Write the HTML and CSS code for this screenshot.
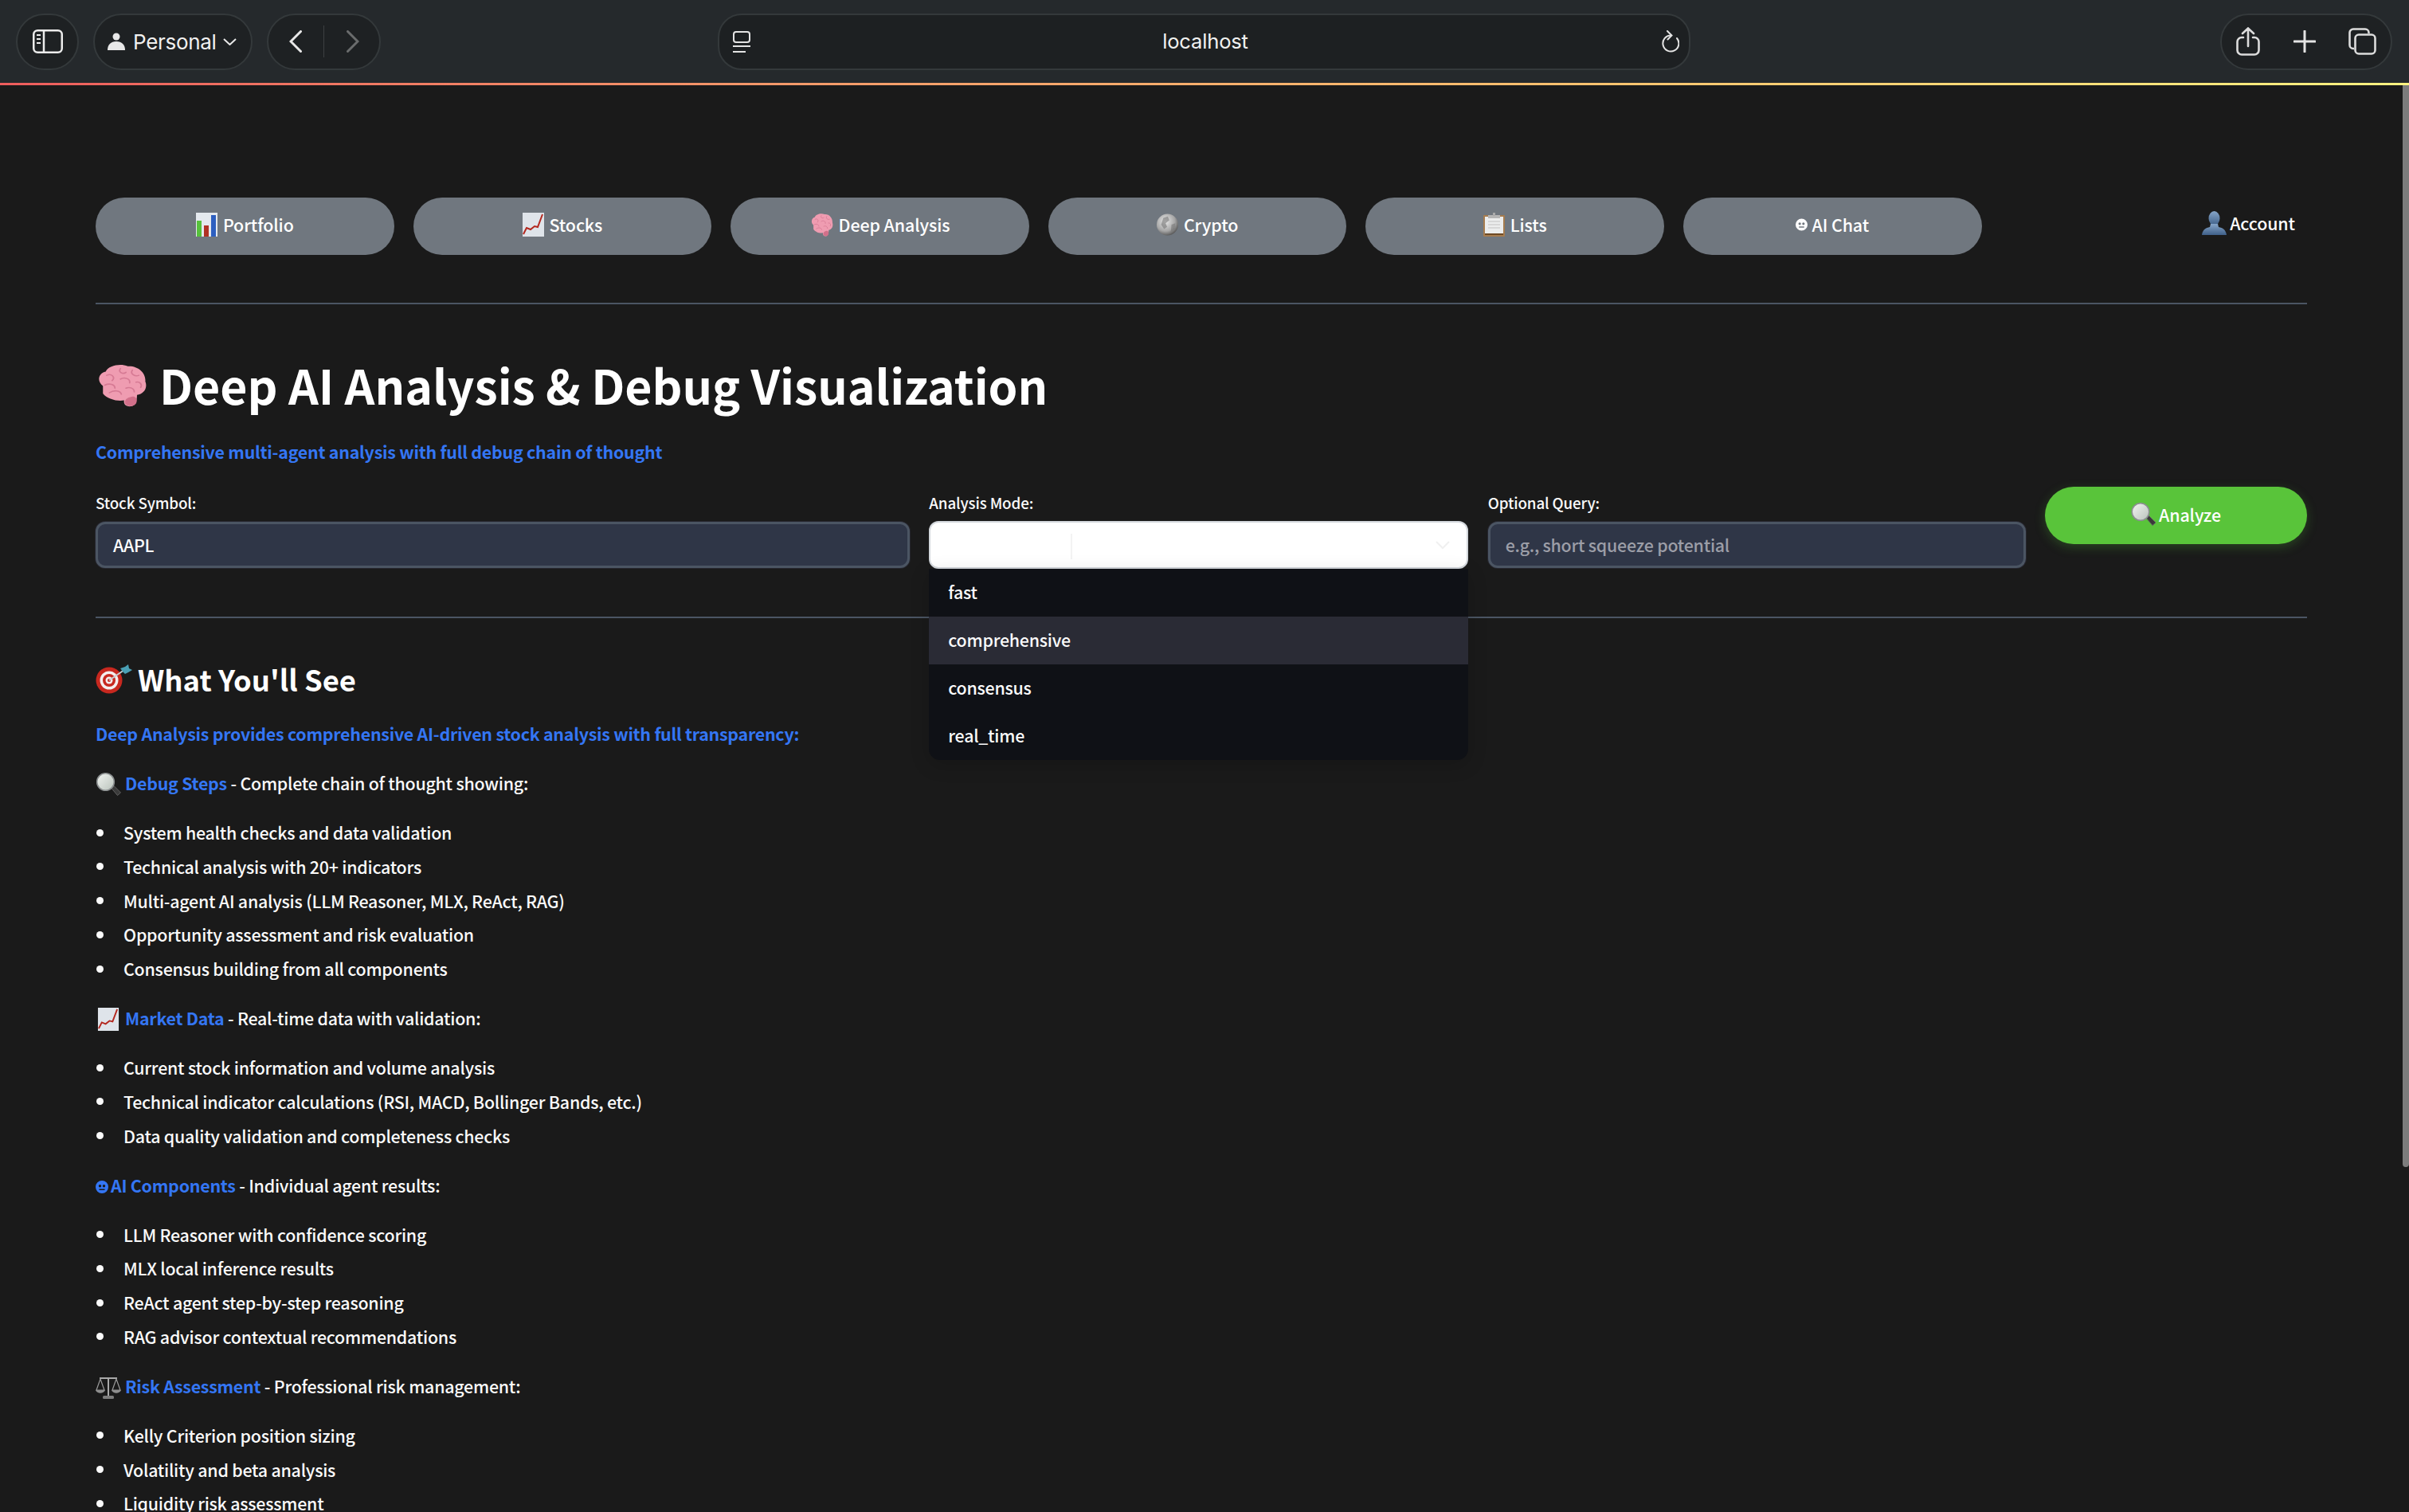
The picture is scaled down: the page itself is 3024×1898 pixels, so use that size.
FILE: index.html
```html
<!DOCTYPE html>
<html lang="en">
<head>
<meta charset="utf-8">
<title>Deep AI Analysis</title>
<link rel="stylesheet" href="styles.css">
</head>
<body>
<svg class="defs" width="0" height="0" aria-hidden="true">
  <defs>
    <linearGradient id="glass" x1="0" y1="0" x2="1" y2="1"><stop offset="0" stop-color="#f2f5f2"/><stop offset="1" stop-color="#b9c2bb"/></linearGradient>
    <radialGradient id="globe" cx="0.4" cy="0.35" r="0.75"><stop offset="0" stop-color="#e8e8e8"/><stop offset="0.6" stop-color="#a5a5a5"/><stop offset="1" stop-color="#3f3f3f"/></radialGradient>
    <linearGradient id="bustg" x1="0" y1="0" x2="0" y2="1"><stop offset="0" stop-color="#86a5c8"/><stop offset="1" stop-color="#3f6089"/></linearGradient>
    <symbol id="i-bars" viewBox="0 0 27 30">
      <rect width="27" height="30" fill="#e4e9ee"/><rect x="1" y="10" width="6" height="20" fill="#57c23c"/><rect x="10" y="16" width="6" height="14" fill="#b03225"/><rect x="19" y="3" width="6" height="27" fill="#2d5fc0"/>
    </symbol>
    <symbol id="i-chart" viewBox="0 0 27 30">
      <rect width="27" height="30" fill="#dfe4ea"/><path d="M1 27 L5 19 L10 21 L15 17 L19 18 L25 2" fill="none" stroke="#b4281f" stroke-width="2"/>
    </symbol>
    <symbol id="i-brain" viewBox="0 0 58 58" preserveAspectRatio="none">
      <path d="M8 30C1 24 3 13 11 11C14 3 27 0 35 4C46 3 55 13 54 24C57 33 52 41 45 42C45 48 44 55 39 57C33 58 30 54 31 49C24 51 12 47 8 40Z" fill="#ef9cb1"/>
      <path d="M40 44C44 44 46 48 44 53C42 58 34 58 32 53C31 48 35 45 40 44Z" fill="#d2708a"/>
      <path d="M12 16C17 13 22 18 18 23M27 7C24 12 30 15 33 12M40 9C37 14 43 18 47 16M10 29C15 26 21 28 21 33M27 21C31 18 38 20 37 26M44 25C48 24 51 28 49 32M15 39C20 35 27 36 28 41M33 33C37 31 42 33 42 38" fill="none" stroke="#d67a94" stroke-width="1.600" stroke-linecap="round"/>
    </symbol>
    <symbol id="i-globe" viewBox="0 0 29 30">
      <circle cx="14.500" cy="15" r="14.500" fill="url(#globe)"/>
      <path d="M9 6L15 4L17 9L12 13L14 18L10 21L6 15ZM20 15L25 13L24 21L19 25Z" fill="#777" opacity="0.6"/>
    </symbol>
    <symbol id="i-clip" viewBox="0 0 27 30">
      <rect y="3" width="27" height="27" rx="1" fill="#a67c4f"/><rect x="2" y="5" width="23" height="21" fill="#eceded"/><rect x="2" y="26" width="23" height="2" fill="#6e4a24"/><rect x="6" y="3" width="15" height="4" fill="#b5b5b5"/><rect x="12" y="0" width="3" height="4" fill="#aaa"/>
      <path d="M6 11H21M6 15H21M6 19H21" stroke="#cfcfcf" stroke-width="1.500"/>
    </symbol>
    <symbol id="i-bust" viewBox="0 0 31 30">
      <ellipse cx="15.500" cy="9" rx="7" ry="9" fill="url(#bustg)"/><path d="M11 16H20L21 20C26 21 30 23 31 30H0C1 23 5 21 10 20Z" fill="url(#bustg)"/>
    </symbol>
    <symbol id="i-lens" viewBox="0 0 31 29">
      <path d="M19 19L27 28.500L31 25L22 16Z" fill="#3a3a3a" stroke="#606060" stroke-width="1"/>
      <circle cx="12" cy="11.500" r="10.800" fill="url(#glass)" stroke="#8b8f90" stroke-width="1.600"/>
    </symbol>
    <symbol id="i-dart" viewBox="0 0 46 37">
      <circle cx="17" cy="20" r="16.500" fill="#c8281f"/><circle cx="17" cy="20" r="11.500" fill="#f4eeee"/><circle cx="17" cy="20" r="8" fill="#c8281f"/><circle cx="17" cy="20" r="4.500" fill="#f4eeee"/><circle cx="17" cy="20" r="2" fill="#c8281f"/>
      <path d="M17 20L36 7" stroke="#c9cdd0" stroke-width="2"/><path d="M31 5L37 3L41 0L42 5L46 7L41 10L37 12L34 9Z" fill="#4aa0b5"/>
    </symbol>
    <symbol id="i-scales" viewBox="0 0 32 29">
      <path d="M16 2V25M5 3H27M10 27H22" stroke="#a9a9a9" stroke-width="2" fill="none"/>
      <path d="M6 4L1 18H11ZM26 4L21 18H31Z" fill="none" stroke="#9a9a9a" stroke-width="1.200"/>
      <path d="M0 18C2 23 10 23 12 18ZM20 18C22 23 30 23 32 18Z" fill="#8e8e8e"/><rect x="9" y="25" width="14" height="4" rx="1.500" fill="#7c7c7c"/>
    </symbol>
    <symbol id="i-bot" viewBox="0 0 16 16">
      <path fill-rule="evenodd" d="M8 0a8 8 0 1 1 0 16A8 8 0 0 1 8 0ZM5.500 5a1.700 1.700 0 1 0 0 3.400 1.700 1.700 0 0 0 0-3.400ZM10.500 5a1.700 1.700 0 1 0 0 3.400 1.700 1.700 0 0 0 0-3.400ZM4.500 10.500V12H11.500V10.500Z" fill="currentColor"/>
    </symbol>
  </defs>
</svg>

<header class="toolbar">
  <div class="pill pill-side">
    <svg class="tb" width="38" height="30" viewBox="0 0 38 30"><rect x="1.250" y="1.250" width="35.500" height="27.500" rx="5" fill="none" stroke="#ececec" stroke-width="2.500"/><path d="M14 1V29" stroke="#ececec" stroke-width="2.500"/><path d="M5 7H10M5 12H10M5 17H10" stroke="#ececec" stroke-width="2"/></svg>
  </div>
  <div class="pill pill-profile">
    <svg width="22" height="22" viewBox="0 0 22 22"><circle cx="11" cy="5" r="4.500" fill="#e8e8e8"/><path d="M0 22C0 15 4 11 11 11S22 15 22 22Z" fill="#e8e8e8"/></svg>
    <span class="profile-name">Personal</span>
    <svg width="17" height="9" viewBox="0 0 17 9"><path d="M1 1L8.500 8L16 1" fill="none" stroke="#e8e8e8" stroke-width="2"/></svg>
  </div>
  <div class="pill pill-nav">
    <svg width="16" height="28" viewBox="0 0 16 28"><path d="M14.500 1.500L2 14L14.500 26.500" fill="none" stroke="#e8e8e8" stroke-width="3" stroke-linecap="round"/></svg>
    <span class="pill-divider"></span>
    <svg width="16" height="28" viewBox="0 0 16 28"><path d="M1.500 1.500L14 14L1.500 26.500" fill="none" stroke="#6a6c6d" stroke-width="3" stroke-linecap="round"/></svg>
  </div>
  <div class="address">
    <svg width="22" height="27" viewBox="0 0 22 27"><rect x="1" y="1" width="20" height="13" rx="3" fill="none" stroke="#e4e4e4" stroke-width="2"/><path d="M0 19H22M0 26H16" stroke="#e4e4e4" stroke-width="2"/></svg>
    <span class="address-text">localhost</span>
    <svg width="24" height="28" viewBox="0 0 24 28"><path d="M13.500 6.500A10 10 0 1 0 21 10" fill="none" stroke="#e4e4e4" stroke-width="2" stroke-linecap="round"/><path d="M9 1L14.500 6.500L9.500 11.500" fill="none" stroke="#e4e4e4" stroke-width="2" stroke-linecap="round"/></svg>
  </div>
  <div class="pill pill-actions">
    <svg width="30" height="36" viewBox="0 0 30 36"><path d="M9 13H7a5.500 5.500 0 0 0-5.500 5.500V29A5.500 5.500 0 0 0 7 34.500H23A5.500 5.500 0 0 0 28.500 29V18.500A5.500 5.500 0 0 0 23 13H21M15 24V2M8 8L15 1.500L22 8" fill="none" stroke="#dcdcdc" stroke-width="2.600" stroke-linecap="round"/></svg>
    <svg width="28" height="28" viewBox="0 0 28 28"><path d="M14 1V27M1 14H27" stroke="#e4e4e4" stroke-width="3" stroke-linecap="round"/></svg>
    <svg width="35" height="34" viewBox="0 0 35 34"><path d="M7 26H6A4.500 4.500 0 0 1 1.500 21.500V6A4.500 4.500 0 0 1 6 1.500H21A4.500 4.500 0 0 1 25.500 6V7" fill="none" stroke="#dcdcdc" stroke-width="2.600"/><rect x="8.500" y="8.500" width="25" height="24" rx="4.500" fill="none" stroke="#dcdcdc" stroke-width="2.600"/></svg>
  </div>
</header>
<div class="rainbow"></div>
<div class="scrollbar"></div>

<main class="page">
  <nav class="nav">
    <a class="nav-btn"><svg class="em-30"><use href="#i-bars"/></svg>Portfolio</a>
    <a class="nav-btn"><svg class="em-30"><use href="#i-chart"/></svg>Stocks</a>
    <a class="nav-btn"><svg class="em-30 em-brain"><use href="#i-brain"/></svg>Deep Analysis</a>
    <a class="nav-btn"><svg class="em-30"><use href="#i-globe"/></svg>Crypto</a>
    <a class="nav-btn"><svg class="em-30"><use href="#i-clip"/></svg>Lists</a>
    <a class="nav-btn"><svg class="em-bot"><use href="#i-bot"/></svg>AI Chat</a>
    <a class="account"><svg class="em-bust"><use href="#i-bust"/></svg>Account</a>
  </nav>
  <hr class="rule rule-top">

  <h1 class="title"><svg class="em-h1"><use href="#i-brain"/></svg>Deep AI Analysis &amp; Debug Visualization</h1>
  <p class="lead">Comprehensive multi-agent analysis with full debug chain of thought</p>

  <form class="controls">
    <div class="field">
      <label class="label">Stock Symbol:</label>
      <div class="input">AAPL</div>
    </div>
    <div class="field">
      <label class="label">Analysis Mode:</label>
      <div class="select">
        <span class="select-sep"></span>
        <svg class="select-chev" width="20" height="12" viewBox="0 0 20 12"><path d="M2 2L10 10L18 2" fill="none" stroke="#f0f0f0" stroke-width="2"/></svg>
        <ul class="menu">
          <li class="menu-item">fast</li>
          <li class="menu-item is-active">comprehensive</li>
          <li class="menu-item">consensus</li>
          <li class="menu-item">real_time</li>
        </ul>
      </div>
    </div>
    <div class="field">
      <label class="label">Optional Query:</label>
      <div class="input is-placeholder">e.g., short squeeze potential</div>
    </div>
    <button class="analyze" type="button"><svg class="em-lens"><use href="#i-lens"/></svg>Analyze</button>
  </form>
  <hr class="rule rule-mid">

  <h2 class="section"><svg class="em-dart"><use href="#i-dart"/></svg>What You'll See</h2>
  <p class="para"><strong class="hl">Deep Analysis provides comprehensive AI-driven stock analysis with full transparency:</strong></p>

  <p class="para"><svg class="em-inline"><use href="#i-lens"/></svg><strong class="hl">Debug Steps</strong> - Complete chain of thought showing:</p>
  <ul class="list">
    <li>System health checks and data validation</li>
    <li>Technical analysis with 20+ indicators</li>
    <li>Multi-agent AI analysis (LLM Reasoner, MLX, ReAct, RAG)</li>
    <li>Opportunity assessment and risk evaluation</li>
    <li>Consensus building from all components</li>
  </ul>

  <p class="para"><svg class="em-inline"><use href="#i-chart"/></svg><strong class="hl">Market Data</strong> - Real-time data with validation:</p>
  <ul class="list">
    <li>Current stock information and volume analysis</li>
    <li>Technical indicator calculations (RSI, MACD, Bollinger Bands, etc.)</li>
    <li>Data quality validation and completeness checks</li>
  </ul>

  <p class="para"><strong class="hl"><svg class="em-bot-inline"><use href="#i-bot"/></svg>AI Components</strong> - Individual agent results:</p>
  <ul class="list">
    <li>LLM Reasoner with confidence scoring</li>
    <li>MLX local inference results</li>
    <li>ReAct agent step-by-step reasoning</li>
    <li>RAG advisor contextual recommendations</li>
  </ul>

  <p class="para"><svg class="em-inline"><use href="#i-scales"/></svg><strong class="hl">Risk Assessment</strong> - Professional risk management:</p>
  <ul class="list">
    <li>Kelly Criterion position sizing</li>
    <li>Volatility and beta analysis</li>
    <li>Liquidity risk assessment</li>
  </ul>
</main>
</body>
</html>
```

FILE: styles.css
```css
* { box-sizing: border-box; }
html, body { margin: 0; height: 100%; overflow: hidden; background: #1a1a1a; }
body { font-family: "Noto Sans CJK SC", "Noto Sans", sans-serif; font-weight: 500; color: #fafafa; position: relative; }
.defs { position: absolute; }

.toolbar { height: 104px; background: #25292c; display: flex; align-items: center; padding: 0 21px 0 20px; font-family: Inter, "Liberation Sans", sans-serif; font-weight: 400; color: #f0f0f0; }
.pill { height: 71px; border-radius: 36px; background: #1e2123; border: 2px solid #34393b; display: flex; align-items: center; }
.pill-side { width: 79px; justify-content: center; }
.pill-profile { width: 200px; margin-left: 18px; padding-left: 16px; }
.profile-name { font-size: 26px; margin: 0 8px 0 10px; letter-spacing: -0.3px; }
.pill-nav { width: 143px; margin-left: 18px; padding-left: 26px; }
.pill-divider { width: 1px; height: 40px; background: #3d4042; margin: 0 28px 0 27px; }
.address { width: 1221px; height: 71px; margin-left: 423px; border-radius: 30px; background: #1d2022; border: 2px solid #34393b; display: flex; align-items: center; justify-content: space-between; padding: 0 12px 0 17px; }
.address-text { font-size: 25.600px; margin-bottom: 2px; letter-spacing: -0.2px; }
.pill-actions { width: 216px; margin-left: auto; justify-content: space-between; padding: 0 18px 0 18px; }

.rainbow { height: 3px; background: linear-gradient(90deg, #ee5d5d 0%, #f49a6a 33%, #fbc26f 66%, #fdf280 100%); }
.scrollbar { position: absolute; right: 0; top: 107px; width: 8px; height: 1358px; background: #7c7c7c; border-radius: 0 0 4px 4px; }

.page { padding: 141px 128px 0 120px; }
.nav { display: flex; align-items: center; gap: 24px; }
.nav-btn { width: 374.600px; height: 72px; padding-bottom: 4px; border-radius: 36px; background: #70777f; color: #fff; display: flex; align-items: center; justify-content: center; font-size: 21.400px; letter-spacing: -0.1px; line-height: 30px; }
.account { margin-left: auto; margin-right: 15px; margin-bottom: 8px; display: flex; align-items: center; font-size: 21.400px; letter-spacing: -0.1px; line-height: 30px; color: #fff; }
.em-30 { width: 27px; height: 30px; margin-right: 7px; }
.em-brain { width: 30px; margin-right: 6px; }
.em-bot { width: 15px; height: 16px; margin-right: 5px; }
.em-bust { width: 31px; height: 30px; margin-right: 4px; }

.rule { border: 0; height: 2px; background: #4b5563; margin: 0; }
.rule-top { margin-top: 60px; }
.title { margin: 0; margin-top: 63px; font-size: 59px; line-height: 76px; font-weight: 700; color: #fff; display: flex; align-items: center; letter-spacing: -0.02px; }
.em-h1 { width: 67px; height: 55px; margin-right: 13px; }
.lead { margin: 26.500px 0 0; font-size: 21.400px; letter-spacing: -0.24px; line-height: 38px; font-weight: 700; color: #3476f4; }

.controls { display: grid; grid-template-columns: 1022px 677px 675px 1fr; column-gap: 24.330px; margin-top: 25.500px; height: 156px; }
.label { display: block; font-size: 18.800px; letter-spacing: -0.15px; line-height: 28px; margin-top: 6px; height: 38px; }
.input { height: 58px; padding-bottom: 2px; border-radius: 12px; background: #2f3647; border: 3px solid #4b5563; display: flex; align-items: center; padding-left: 19px; font-size: 21.400px; letter-spacing: -0.25px; color: #fff; box-shadow: 0 0 0 1px #26262e; }
.is-placeholder { color: #9c9ea7; }
.select { position: relative; height: 60px; margin-top: -1px; border-radius: 12px; background: #fff; border: 2px solid #d3d7dc; }
.select-sep { position: absolute; left: 176px; top: 14px; width: 2px; height: 32px; background: #f3f3f3; }
.select-chev { position: absolute; right: 20px; top: 22px; }
.menu { position: absolute; left: -2px; right: -2px; top: 58px; margin: 0; padding: 0; list-style: none; background: #0f1116; border-radius: 0 0 14px 14px; box-shadow: 0 6px 24px rgba(0, 0, 0, 0.16); overflow: hidden; z-index: 2; }
.menu-item { height: 60px; padding-bottom: 3px; display: flex; align-items: center; padding-left: 24px; font-size: 21.400px; letter-spacing: -0.25px; color: #fafafa; }
.is-active { background: #2a2b35; }
.analyze { width: 329px; height: 72px; border: 0; padding: 0 0 3px; border-radius: 36px; background: #59c43a; color: #fff; font-family: inherit; font-weight: 500; font-size: 21.400px; letter-spacing: -0.1px; display: flex; align-items: center; justify-content: center; box-shadow: 0 4px 14px rgba(89, 196, 58, 0.25); }
.em-lens { width: 31px; height: 29px; margin-right: 4px; }
.rule-mid { margin-top: 7px; }

.section { margin: 50px 0 0; font-size: 36.400px; line-height: 52px; font-weight: 700; color: #fff; display: flex; align-items: center; }
.em-dart { width: 46px; height: 37px; margin-right: 7px; }
.para { margin: 0 0 24px; font-size: 21.400px; letter-spacing: -0.24px; line-height: 38px; color: #fafafa; }
.section + .para { margin-top: 24px; }
.hl { color: #3476f4; font-weight: 700; letter-spacing: -0.26px; }
.em-inline { width: 32px; height: 29px; vertical-align: -7px; margin-right: 5px; }
.em-bot-inline { width: 16px; height: 16px; margin-right: 3px; vertical-align: -1px; }
.list { margin: 0 0 24px; padding: 0 0 0 1px; list-style: none; font-size: 21.400px; letter-spacing: -0.24px; line-height: 38px; color: #fafafa; }
.list li { display: flex; align-items: center; margin-bottom: 4.750px; }
.list li::before { content: ""; width: 9px; height: 9px; border-radius: 50%; background: #fafafa; margin-right: 25px; flex: none; }
.list li:last-child { margin-bottom: 0; }
```
